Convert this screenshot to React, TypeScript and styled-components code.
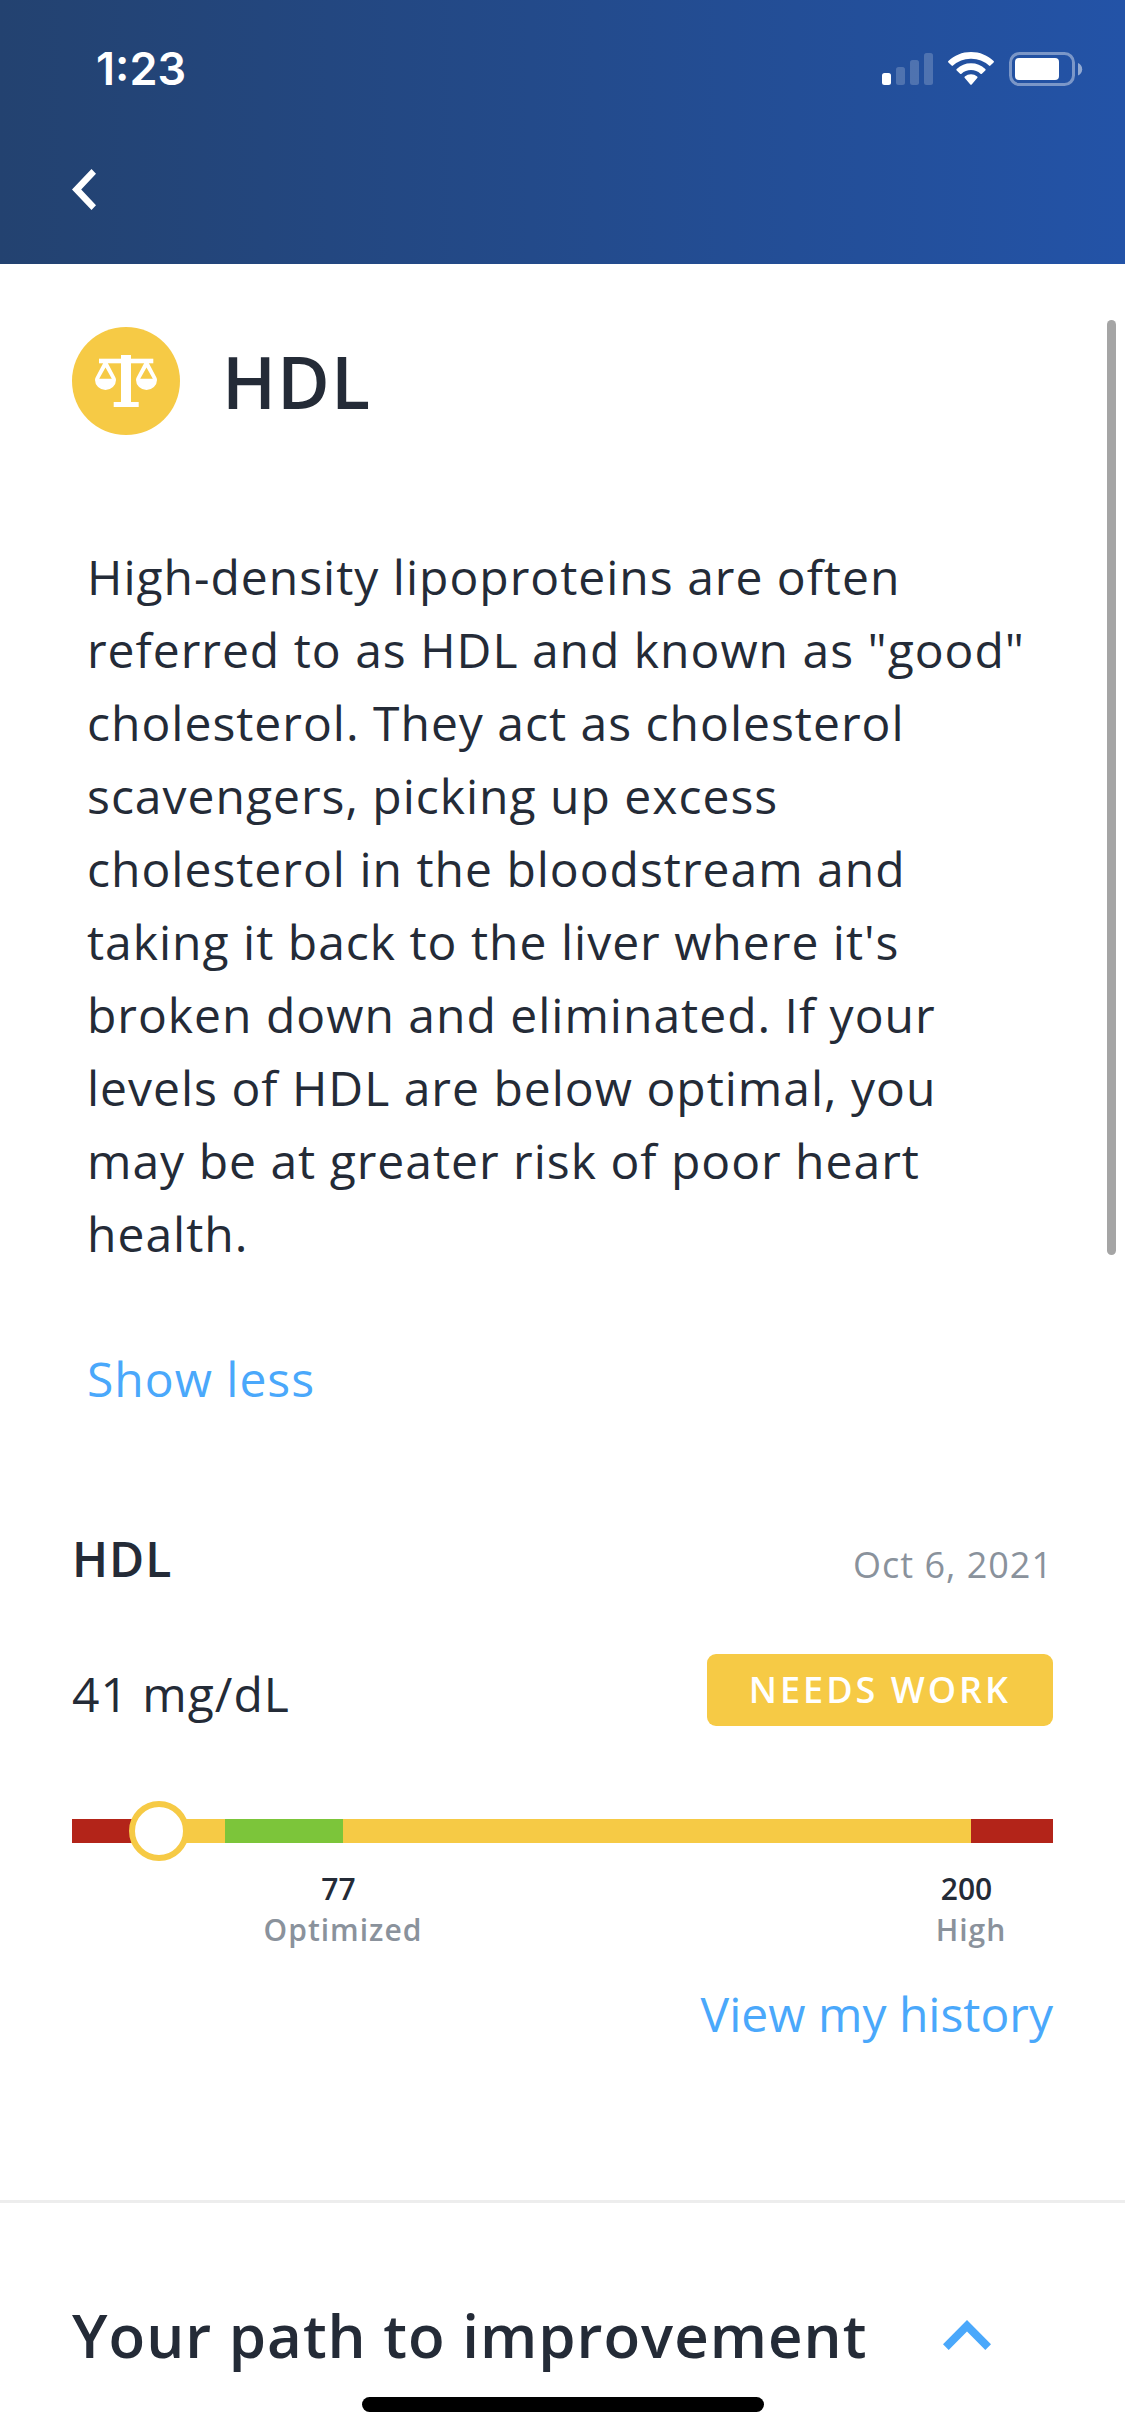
import React, { useState } from 'react';
import styled, { createGlobalStyle } from 'styled-components';

const colors = {
  ink: '#242b37',
  muted: '#8a929c',
  link: '#4aa8fb',
  yellow: '#f6ca45',
  green: '#7cc53a',
  red: '#b32419',
  line: '#ededed',
};

const GlobalStyle = createGlobalStyle`
  *, *::before, *::after { box-sizing: border-box; }
  body {
    margin: 0;
    background: #fff;
    color: ${colors.ink};
    font-family: 'Open Sans', 'Noto Sans', sans-serif;
  }
`;

const Page = styled.div`
  min-height: 100vh;
  display: flex;
  flex-direction: column;
`;

const Header = styled.header`
  display: flex;
  flex-direction: column;
  gap: 64px;
  height: 264px;
  padding: 41px 42px 0 72px;
  background: linear-gradient(90deg, #234270, #2353a7);
`;

const StatusBar = styled.div`
  display: flex;
  align-items: center;
  justify-content: space-between;
  padding-left: 24px;
`;

const Time = styled.time`
  color: #fff;
  font: 600 45px/56px Inter, sans-serif;
`;

const StatusIcons = styled.div`
  display: flex;
  align-items: center;
  gap: 15px;
`;

const IconButton = styled.button`
  display: flex;
  align-items: center;
  padding: 8px 0;
  border: 0;
  background: none;
  color: inherit;
  cursor: pointer;
`;

const BackButton = styled(IconButton)`
  align-self: flex-start;
  color: #fff;
`;

const Intro = styled.section`
  padding: 54px 87px 0;
`;

const TitleRow = styled.div`
  display: flex;
  align-items: center;
  gap: 42px;
  margin-left: -15px;
`;

const Title = styled.h1`
  margin: 0;
  font-size: 72px;
  font-weight: 600;
  line-height: 126px;
  letter-spacing: 1px;
`;

const Description = styled.p`
  margin: 96px 0 72px;
  font-size: 48px;
  line-height: 73px;
  letter-spacing: 1px;
`;

const TextButton = styled.button`
  padding: 0;
  border: 0;
  background: none;
  color: ${colors.link};
  font: inherit;
  font-size: 48px;
  line-height: 73px;
  letter-spacing: 1px;
  cursor: pointer;
`;

const Result = styled.section`
  display: flex;
  flex-direction: column;
  padding: 108px 72px 150px;
  border-bottom: 3px solid ${colors.line};
`;

const Row = styled.div`
  display: flex;
  align-items: center;
  justify-content: space-between;
`;

const ResultName = styled.h2`
  margin: 0;
  font-size: 48px;
  font-weight: 600;
  line-height: 72px;
  letter-spacing: 1px;
`;

const ResultDate = styled.time`
  padding-top: 12px;
  color: ${colors.muted};
  font-size: 36px;
  line-height: 60px;
  letter-spacing: 1px;
`;

const Reading = styled.span`
  padding-top: 8px;
  font-size: 48px;
  line-height: 64px;
  letter-spacing: 1px;
`;

const ReadingRow = styled(Row)`
  margin-top: 59px;
`;

const Badge = styled.span`
  padding: 0 42px;
  border-radius: 9px;
  background: ${colors.yellow};
  color: #fff;
  font-size: 36px;
  font-weight: 600;
  line-height: 72px;
  letter-spacing: 3px;
`;

const Gauge = styled.div`
  position: relative;
  margin-top: 93px;
`;

const Track = styled.div<{ $columns: string }>`
  display: grid;
  grid-template-columns: ${(p) => p.$columns};
`;

const Band = styled.div<{ $color: string }>`
  height: 24px;
  background: ${(p) => p.$color};
`;

const Knob = styled.div`
  position: absolute;
  top: -18px;
  width: 60px;
  height: 60px;
  margin-left: -30px;
  border: 6px solid ${colors.yellow};
  border-radius: 50%;
  background: #fff;
`;

const TickCell = styled.div`
  display: flex;
  justify-content: flex-end;
  min-width: 0;
  height: 82px;
  margin-top: 25px;
`;

const Tick = styled.div`
  display: flex;
  flex-direction: column;
  align-items: center;
  width: 0;
  white-space: nowrap;
  font-size: 30px;
  font-weight: 600;
  line-height: 41px;
`;

const TickValue = styled.span`
  padding-right: 9px;
`;

const TickLabel = styled.span`
  color: ${colors.muted};
  letter-spacing: 1px;
`;

const HistoryLink = styled.a`
  align-self: flex-end;
  margin-top: 28px;
  color: ${colors.link};
  font-size: 48px;
  line-height: 72px;
  text-decoration: none;
`;

const Path = styled.section`
  display: flex;
  align-items: center;
  justify-content: space-between;
  padding: 90px 134px 0 72px;
`;

const PathTitle = styled.h2`
  margin: 0;
  font-size: 60px;
  font-weight: 600;
  line-height: 84px;
  letter-spacing: 1px;
`;

const PathToggle = styled(IconButton)`
  color: ${colors.link};
`;

const ScrollThumb = styled.div`
  position: fixed;
  top: 320px;
  right: 9px;
  width: 9px;
  height: 935px;
  border-radius: 5px;
  background: #a5a5a5;
`;

const HomeIndicator = styled.div`
  position: fixed;
  bottom: 24px;
  left: 50%;
  width: 402px;
  height: 15px;
  border-radius: 8px;
  background: #000;
  transform: translateX(-50%);
`;

const SignalIcon = () => (
  <svg width="51" height="34" viewBox="0 0 51 34" fill="#fff" aria-label="Signal">
    <rect x="0" y="21" width="9" height="12" rx="2.5" />
    <rect x="14" y="15" width="9" height="18" rx="2.5" opacity="0.2" />
    <rect x="28" y="8" width="9" height="25" rx="2.5" opacity="0.2" />
    <rect x="42" y="1" width="9" height="32" rx="2.5" opacity="0.2" />
  </svg>
);

const WifiIcon = () => (
  <svg width="46" height="34" viewBox="0 0 46 34" fill="#fff" aria-label="Wi-Fi">
    <path d="M23 0C14.200 0 6.300 3.400 .400 9a1 1 0 0 0 0 1.400L3.600 13.600a1 1 0 0 0 1.400 0A26 26 0 0 1 23 6.700a26 26 0 0 1 18 6.900a1 1 0 0 0 1.400 0L45.600 10.400a1 1 0 0 0 0-1.400C39.700 3.400 31.800 0 23 0z" />
    <path d="M23 11.200a21 21 0 0 0-14.300 5.700a1 1 0 0 0 0 1.500l3.400 3.300a1 1 0 0 0 1.400 0a14 14 0 0 1 19 0a1 1 0 0 0 1.400 0l3.400-3.300a1 1 0 0 0 0-1.500A21 21 0 0 0 23 11.200z" />
    <path d="M23 22.300a10 10 0 0 0-6.200 2.300a1 1 0 0 0 0 1.500l5.500 6.300a1 1 0 0 0 1.400 0l5.500-6.300a1 1 0 0 0 0-1.500A10 10 0 0 0 23 22.300z" />
  </svg>
);

const BatteryIcon = () => (
  <svg width="74" height="34" viewBox="0 0 74 34" aria-label="Battery">
    <rect x="1.500" y="1.500" width="63" height="31" rx="9" fill="none" stroke="#fff" strokeWidth="3" opacity="0.4" />
    <rect x="6" y="6" width="44" height="22" rx="4" fill="#fff" />
    <path d="M69 11v12.500c2.600-1 4.200-3.400 4.200-6.200S71.600 12 69 11z" fill="#fff" opacity="0.5" />
  </svg>
);

const ScalesIcon = () => (
  <svg width="108" height="108" viewBox="0 0 108 108" aria-hidden="true">
    <circle cx="54" cy="54" r="54" fill={colors.yellow} />
    <g fill="#fff">
      <rect x="49" y="28" width="10" height="52" />
      <rect x="27" y="31.700" width="54.300" height="4.600" />
      <rect x="41.700" y="75" width="25" height="5" />
      <path
        fillRule="evenodd"
        d="M31.500 35.500L23.600 50.500C23.200 51.500 23 52.300 23 53a10.500 10 0 0 0 21 0C44 52.300 43.800 51.500 43.400 50.500L35.500 35.500zM33.500 40.500L39.800 51.700H27.200z"
      />
      <path
        fillRule="evenodd"
        d="M72.500 35.500L64.600 50.500C64.200 51.500 64 52.300 64 53a10.500 10 0 0 0 21 0C85 52.300 84.800 51.500 84.400 50.500L76.500 35.500zM74.500 40.500L80.800 51.700H68.200z"
      />
    </g>
  </svg>
);

const BackIcon = () => (
  <svg width="24" height="41" viewBox="0 0 24 41" fill="currentColor" aria-hidden="true">
    <path d="M0 20.500L19.500 0L24 4.800L9.200 20.500L24 36.200L19.500 41z" />
  </svg>
);

const ChevronUpIcon = () => (
  <svg width="48" height="30" viewBox="0 0 48 30" fill="currentColor" aria-hidden="true">
    <path d="M24 0L48 24.300L42.300 30L24 11.500L5.700 30L0 24.300z" />
  </svg>
);

const bands = [
  { share: 86, color: colors.red },
  { share: 67, color: colors.yellow },
  { share: 118, color: colors.green, value: '77', label: 'Optimized' },
  { share: 628, color: colors.yellow, value: '200', label: 'High' },
  { share: 82, color: colors.red },
];

const columns = bands.map((b) => `${b.share}fr`).join(' ');
const total = bands.reduce((sum, b) => sum + b.share, 0);
const knobAt = (87 / total) * 100;

const summary =
  'High-density lipoproteins are often referred to as HDL and known as "good" cholesterol.';
const details =
  "They act as cholesterol scavengers, picking up excess cholesterol in the bloodstream and taking it back to the liver where it's broken down and eliminated. If your levels of HDL are below optimal, you may be at greater risk of poor heart health.";

export default function App() {
  const [expanded, setExpanded] = useState(true);

  return (
    <Page>
      <GlobalStyle />
      <Header>
        <StatusBar>
          <Time>1:23</Time>
          <StatusIcons>
            <SignalIcon />
            <WifiIcon />
            <BatteryIcon />
          </StatusIcons>
        </StatusBar>
        <BackButton type="button" aria-label="Back">
          <BackIcon />
        </BackButton>
      </Header>

      <main>
        <Intro>
          <TitleRow>
            <ScalesIcon />
            <Title>HDL</Title>
          </TitleRow>
          <Description>{expanded ? `${summary} ${details}` : summary}</Description>
          <TextButton type="button" onClick={() => setExpanded(!expanded)}>
            {expanded ? 'Show less' : 'Show more'}
          </TextButton>
        </Intro>

        <Result>
          <Row>
            <ResultName>HDL</ResultName>
            <ResultDate dateTime="2021-10-06">Oct 6, 2021</ResultDate>
          </Row>
          <ReadingRow>
            <Reading>41 mg/dL</Reading>
            <Badge>NEEDS WORK</Badge>
          </ReadingRow>
          <Gauge role="meter" aria-label="HDL" aria-valuenow={41} aria-valuemin={0} aria-valuemax={225}>
            <Track $columns={columns}>
              {bands.map((b, i) => (
                <Band key={i} $color={b.color} />
              ))}
            </Track>
            <Track $columns={columns}>
              {bands.map((b, i) => (
                <TickCell key={i}>
                  {b.value && (
                    <Tick>
                      <TickValue>{b.value}</TickValue>
                      <TickLabel>{b.label}</TickLabel>
                    </Tick>
                  )}
                </TickCell>
              ))}
            </Track>
            <Knob style={{ left: `${knobAt}%` }} />
          </Gauge>
          <HistoryLink href="#history">View my history</HistoryLink>
        </Result>

        <Path>
          <PathTitle>Your path to improvement</PathTitle>
          <PathToggle type="button" aria-label="Collapse your path to improvement">
            <ChevronUpIcon />
          </PathToggle>
        </Path>
      </main>

      <ScrollThumb />
      <HomeIndicator />
    </Page>
  );
}
